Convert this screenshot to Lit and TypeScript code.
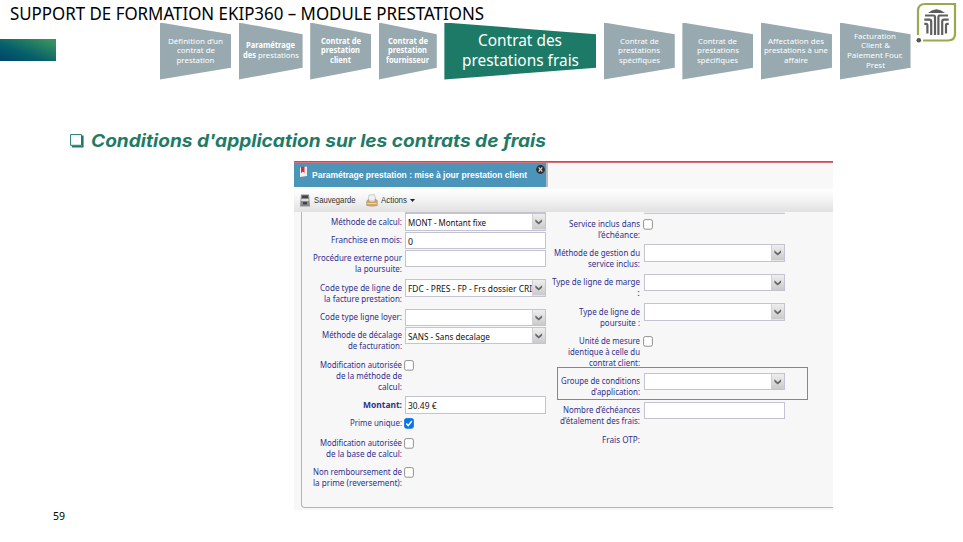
import { LitElement, html, svg, css, nothing } from "lit";
import { customElement, property } from "lit/decorators.js";

type Line = [text: string, width: number];

/** One line of text, condensed or widened to a given width. */
@customElement("fit-text")
class FitText extends LitElement {
  @property({ type: Number }) w = 0;
  @property() text = "";
  static styles = css`
    :host { display: block; white-space: nowrap; overflow: visible; }
    .in { display: inline-block; transform-origin: 0 50%; }
  `;
  updated() {
    const el = this.renderRoot.querySelector<HTMLElement>(".in")!;
    this.style.width = this.w + "px";
    el.style.transform = "none";
    const n = el.getBoundingClientRect().width;
    if (n) el.style.transform = `scaleX(${this.w / n})`;
  }
  render() { return html`<span class="in">${this.text}</span>`; }
}

const fit = ([text, w]: Line, cls = "") => html`<fit-text class=${cls} .text=${text} .w=${w}></fit-text>`;

interface Step { w: number; lines: Line[]; kind?: string; mixed?: boolean }
const steps: Step[] = [
  { w: 71, lines: [["Définition d’un", 55], ["contrat de", 38], ["prestation", 38]] },
  { w: 64, lines: [["Paramétrage", 49]], kind: "bold", mixed: true },
  { w: 61, lines: [["Contrat de", 40], ["prestation", 39], ["client", 21]], kind: "bold" },
  { w: 58, lines: [["Contrat de", 40], ["prestation", 39], ["fournisseur", 43]], kind: "bold" },
  { w: 151.8, lines: [["Contrat des", 84], ["prestations frais", 117]], kind: "active" },
  { w: 71, lines: [["Contrat de", 39], ["prestations", 42], ["spécifiques", 41]] },
  { w: 71, lines: [["Contrat de", 39], ["prestations", 42], ["spécifiques", 41]] },
  { w: 71, lines: [["Affectation des", 56], ["prestations à une", 64], ["affaire", 24]] },
  { w: 71, lines: [["Facturation", 42], ["Client &", 29], ["Paiement Four.", 56], ["Prest", 19]] },
];

interface Field { label: Line[]; type: "text" | "select" | "check" | "none"; value?: Line; checked?: boolean; strong?: boolean; mark?: boolean }
const left: Field[] = [
  { label: [["Méthode de calcul:", 71]], type: "select", value: ["MONT - Montant fixe", 78] },
  { label: [["Franchise en mois:", 71]], type: "text", value: ["0", 5] },
  { label: [["Procédure externe pour", 89], ["la poursuite:", 47]], type: "text" },
  { label: [["Code type de ligne de", 82], ["la facture prestation:", 78]], type: "select", value: ["FDC - PRES - FP - Frs dossier CRI", 124] },
  { label: [["Code type ligne loyer:", 82]], type: "select" },
  { label: [["Méthode de décalage", 80], ["de facturation:", 54]], type: "select", value: ["SANS - Sans decalage", 82] },
  { label: [["Modification autorisée", 82], ["de la méthode de", 66], ["calcul:", 24]], type: "check" },
  { label: [["Montant:", 39]], type: "text", value: ["30.49 €", 28.5], strong: true },
  { label: [["Prime unique:", 52]], type: "check", checked: true },
  { label: [["Modification autorisée", 82], ["de la base de calcul:", 76]], type: "check" },
  { label: [["Non remboursement de", 89], ["la prime (reversement):", 89]], type: "check" },
];
const right: Field[] = [
  { label: [["Service inclus dans", 71], ["l’échéance:", 42]], type: "check" },
  { label: [["Méthode de gestion du", 86], ["service inclus:", 52]], type: "select" },
  { label: [["Type de ligne de marge", 88], [":", 3]], type: "select" },
  { label: [["Type de ligne de", 61], ["poursuite :", 40]], type: "select" },
  { label: [["Unité de mesure", 61], ["identique à celle du", 72], ["contrat client:", 51]], type: "check" },
  { label: [["Groupe de conditions", 79], ["d’application:", 49]], type: "select", mark: true },
  { label: [["Nombre d’échéances", 77], ["d’étalement des frais:", 80]], type: "text" },
  { label: [["Frais OTP:", 38]], type: "none" },
];

const trigger = html`<svg class="trig" viewBox="0 0 13 16" preserveAspectRatio="none">
  <defs><linearGradient id="t" x2="0" y2="1"><stop stop-color="#eee"/><stop offset="1" stop-color="#c9c9cb"/></linearGradient></defs>
  <rect width="13" height="16" fill="url(#t)"/><path d="M.5 0v16" stroke="#cfcfd8"/><path d="M3.400 5.400 6.700 8.400l3.300-3v2.500L6.700 10.900 3.400 7.900z" fill="#666"/></svg>`;

const control = (f: Field) => {
  if (f.type === "none") return nothing;
  if (f.type === "check")
    return html`<svg class="check" viewBox="0 0 10 11">
      <rect x=".6" y=".6" width="8.8" height="9.6" rx="1.7" fill=${f.checked ? "#0b74e5" : "#fff"} stroke=${f.checked ? "#0b74e5" : "#858585"} stroke-width=".9"/>
      ${f.checked ? svg`<path d="M2.3 5.6 4.2 7.6 7.8 3" fill="none" stroke="#fff" stroke-width="1.5"/>` : nothing}</svg>`;
  return html`<div class="box"><div class="val">${f.value ? fit(f.value) : nothing}</div>${f.type === "select" ? trigger : nothing}</div>`;
};

const row = (f: Field) => html`<div class="row ${f.checked ? "tall" : ""}">
  <div class="label ${f.strong ? "strong" : ""}">${f.label.map((l) => fit(l))}</div>
  ${control(f)}${f.mark ? html`<div class="mark"></div>` : nothing}</div>`;

@customElement("app-root")
class AppRoot extends LitElement {
  static styles = css`
    :host { display: block; width: 963px; height: 542px; position: relative; overflow: hidden; background: #fff; font-family: "Noto Sans", sans-serif; }
    .page { display: flex; flex-direction: column; height: 542px; }
    .title { height: 22.5px; padding: 2px 0 0 10px; box-sizing: border-box; font-size: 17.4px; line-height: 22px; color: #000; }
    .band { display: flex; height: 57px; align-items: flex-start; }
    .accent { width: 56px; height: 22px; margin: 16.5px 104px 0 0; background: linear-gradient(to top right, #00496a 8%, #07606a 40%, #38925f 92%); }
    .steps { display: flex; gap: 7.6px; }
    .step { height: 57px; background: #98aab0; color: #fff; clip-path: polygon(0 0, 100% 20.5%, 100% 79.5%, 0 100%); display: flex; flex-direction: column; align-items: center; justify-content: center; font-size: 7.9px; line-height: 9.6px; box-sizing: border-box; }
    .bold { font-weight: 700; }
    .step .mix { display: flex; gap: 2px; }
    .mix .thin { font-weight: 400; }
    .active { background: #1c7a66; font-size: 16.2px; line-height: 20px; padding-bottom: 2px; }
    .logo { position: absolute; left: 916px; top: 2px; width: 41px; height: 41px; }
    .heading { display: flex; align-items: center; gap: 7px; height: 24px; margin: 49.5px 0 0 70px; color: #1f7b66; font: italic 700 17.6px/24px Inter, sans-serif; font-feature-settings: "cv11"; }
    .bullet { width: 14px; height: 14px; }
    .shot { width: 539px; height: 349px; margin: 8px 0 0 294px; background: #f7f7f7; display: flex; flex-direction: column; overflow: hidden; }
    .tabs { height: 28px; box-sizing: border-box; background: linear-gradient(#a8576b 1px, #dd7078 1px, #dd7078 2px, #f8f8f8 2px); padding-top: 2px; flex: none; }
    .tab { width: 252px; height: 24px; background: #4c95ba; display: flex; border-right: 2px solid #bbb; color: #fff; font: 700 9.4px/12px "Liberation Sans", sans-serif; }
    .pin { width: 9px; height: 12px; margin: 2.5px 4px 0 5px; }
    .tabname { padding-top: 6px; }
    .close { width: 9px; height: 9px; margin: 2px 0 0 9px; }
    .tools { height: 22.5px; flex: none; background: linear-gradient(#fff, #f3f3f3 45%, #e1e1e1); display: flex; align-items: center; color: #333; font: 9.4px/12px "Liberation Sans", sans-serif; }
    .save { width: 10px; height: 13px; margin: 0 3.5px 0 6px; }
    .tray { width: 12px; height: 13px; margin: 0 3px 0 10.5px; }
    .caret { width: 5px; height: 3px; margin-left: 3px; }
    .pane { height: 296px; box-sizing: border-box; margin-left: 7px; border: solid #b5b5b9; border-width: 0 0 1.5px 1.5px; border-bottom-left-radius: 4px; display: flex; }
    .col { width: 245px; display: flex; flex-direction: column; }
    .col.second { width: 239px; }
    .stub { height: 1.5px; margin: 0 0 .4px 103px; width: 141px; background: #c3c3d0; flex: none; }
    .second .stub { height: 2.5px; margin: 0 0 1.2px 97px; background: linear-gradient(#fff, #b5b5c6); }
    .row { position: relative; display: grid; grid-template-columns: 99.5px 141.5px; column-gap: 3px; align-items: start; flex: none; }
    .row.tall { padding-bottom: 1px; }
    .second .row { grid-template-columns: 93px 141.5px; column-gap: 3.5px; }
    .label { padding: 3.5px 0 3.8px; display: flex; flex-direction: column; align-items: flex-end; font-size: 8.7px; line-height: 11px; color: #30308f; }
    .strong { font-weight: 700; }
    .box { height: 17.5px; box-sizing: border-box; border: 1px solid #c3c3d2; background: #fff; display: flex; justify-content: space-between; }
    .val { padding: 2px 0 0 2px; width: 0; font-size: 9.2px; line-height: 13px; color: #111; }
    .trig { width: 13px; height: 100%; position: relative; }
    .check { width: 10px; height: 11px; margin-top: 3.5px; margin-left: -1px; }
    .mark { position: absolute; left: 9.5px; top: -6px; width: 251px; height: 33px; box-sizing: border-box; border: 1px solid #ee5a5f; }
    .num { margin: -.5px 0 0 53px; font-size: 10px; line-height: 12px; color: #000; }
  `;

  render() {
    return html`<div class="page">
      <div class="title">${fit(["SUPPORT DE FORMATION EKIP360 – MODULE PRESTATIONS", 474])}</div>
      <div class="band">
        <div class="accent"></div>
        <div class="steps">${steps.map((s) => html`<div class="step ${s.kind ?? ""}" style="width:${s.w}px">
          ${s.lines.map((l) => fit(l))}
          ${s.mixed ? html`<div class="mix">${fit(["des", 13])}${fit(["prestations", 41], "thin")}</div>` : nothing}
        </div>`)}</div>
      </div>
      <svg class="logo" viewBox="0 0 41 41" fill="none">
        <path d="M2 33V9Q2 2 9 2H39V32Q39 38.5 32 38.5H7" stroke="#98aa4e" stroke-width="2.2"/>
        <circle cx="2.8" cy="38.3" r="2.3" fill="#555"/>
        <path d="M12 10.900Q20.500 3.800 29 10.900z" fill="#5b5b5b"/>
        <g stroke="#606060" stroke-width="2.200">
          <path d="M9 13.500H17.600Q19 13.500 19 15.500V33M32 13.500H23.400Q22.400 13.500 22.400 15.500V33"/>
          <path d="M8.300 17.700H13.500Q15.200 17.700 15.200 19.700V33M32.700 17.700H28Q26.200 17.700 26.200 19.700V33"/>
          <path d="M8.300 21.800H10.200Q11.400 21.800 11.400 23.500V31.500M32.700 21.800H31.200Q30 21.800 30 23.500V31.500"/>
        </g>
      </svg>
      <div class="heading">
        <svg class="bullet" viewBox="0 0 14 14"><path d="M.6.6H11.500V11.300H.6z" fill="none" stroke="#1f7b66"/><path d="M12 1.500H13.600V13.400H1.800V11.800H12z" fill="#1f7b66"/></svg>
        ${fit(["Conditions d'application sur les contrats de frais", 455])}
      </div>
      <div class="shot">
        <div class="tabs"><div class="tab">
          <svg class="pin" viewBox="0 0 9 12"><path d="M1 1.500 8 .5V10L1 11z" fill="#f4eeee"/><path d="M2 1 5.500 .5V7L3.800 5.500 2 7.300z" fill="#d22d3b"/></svg>
          <div class="tabname">${fit(["Paramétrage prestation : mise à jour prestation client", 215])}</div>
          <svg class="close" viewBox="0 0 9 9"><circle cx="4.500" cy="4.500" r="4.400" fill="#332f31"/><path d="M2.700 2.300 6.300 6.700M6.300 2.300 2.700 6.700" stroke="#ddd" stroke-width="1.100"/></svg>
        </div></div>
        <div class="tools">
          <svg class="save" viewBox="0 0 10 13"><path d="M1 .5H9L10 12.500H0z" fill="#8b8b8f"/><path d="M2 1.500H8V4H2z" fill="#444"/><path d="M1.300 5H8.700V7H1.300z" fill="#ddd"/><path d="M3 8H7V10.500H3z" fill="#444"/></svg>
          ${fit(["Sauvegarde", 41.5])}
          <svg class="tray" viewBox="0 0 12 13"><path d="M3 1 8.500.5 10 7H2z" fill="#eef0f4" stroke="#aaa" stroke-width=".5"/><path d="M.7 7 3 5.500V8H9V5L11.300 6.500V11.500Q6 13 .7 11.500z" fill="#d9a765" stroke="#9d8161" stroke-width=".5"/><path d="M1.500 9.500H10.500" stroke="#f2d6ab"/></svg>
          ${fit(["Actions", 26])}
          <svg class="caret" viewBox="0 0 5 3"><path d="M0 0H5L2.500 3z" fill="#222"/></svg>
        </div>
        <div class="pane">
          <div class="col"><div class="stub"></div>${left.map(row)}</div>
          <div class="col second"><div class="stub"></div>${right.map(row)}</div>
        </div>
      </div>
      <div class="num">${fit(["59", 12])}</div>
    </div>`;
  }
}
